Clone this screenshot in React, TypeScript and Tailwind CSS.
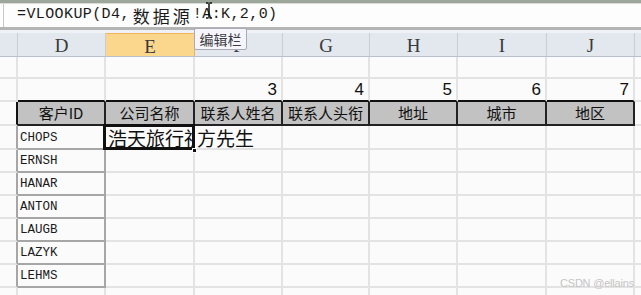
import React from "react";

const widths = [18, 88, 89, 88, 87, 88, 89, 88];
const letters = ["", "D", "E", "F", "G", "H", "I", "J"];
const ids = ["ERNSH", "HANAR", "ANTON", "LAUGB", "LAZYK", "LEHMS"];
const heads = ["客户ID", "公司名称", "联系人姓名", "联系人头衔", "地址", "城市", "地区"];

const mono = { fontFamily: '"Liberation Mono", "Noto Sans CJK SC", monospace' };
const serif = { fontFamily: '"Liberation Serif", serif' };
const cjk = { fontFamily: '"Noto Sans CJK SC", "Liberation Sans", sans-serif' };

function Row({ h, children }: { h: string; children: React.ReactNode }) {
  return <div className={`flex ${h}`}>{children}</div>;
}

export default function App() {
  return (
    <div className="relative w-[641px] h-[295px] overflow-hidden bg-[#fbfbfb]">
      {/* top strip */}
      <div className="h-[3px] bg-[#9ca69a]" />
      <div className="h-[1px] bg-[#d8ddd6]" />
      {/* formula bar */}
      <div className="flex h-[23px] bg-[#fdfdfd]">
        <div className="w-[4px] border-r border-[#c8c8c8]" />
        <div className="flex items-center pl-[13px] text-[15px] text-[#1a1a1a] tracking-[0.4px]" style={mono}>
          <span>=VLOOKUP(D4,</span>
          <span className="text-[17px] tracking-[3px] ml-[3px]" style={cjk}>数据源</span>
          <span>!A:K,2,0)</span>
        </div>
      </div>
      <div className="h-[3px] bg-[#b4b4b4]" />
      <div className="h-[3px] bg-[#eef1f5]" />
      {/* column header */}
      <div className="flex h-[24px] border-b border-[#b9c2cc]">
        {widths.map((w, i) => (
          <div
            key={i}
            style={{ width: w, ...serif }}
            className={`flex items-center justify-center pt-[2px] border-r text-[19px] leading-none text-[#3a3a3a] ${
              i === 2 ? "bg-[#fbd78e] border-[#e8b660] border-t border-t-[#f2b55a]" : "bg-[#e3e8ef] border-[#c6ced8]"
            }`}
          >
            {letters[i]}
          </div>
        ))}
        <div className="flex-1 bg-[#e3e8ef]" />
      </div>
      {/* row 1 empty */}
      <Row h="h-[22px]">
        {widths.map((w, i) => (
          <div key={i} style={{ width: w }} className="border-r-2 border-b-2 border-[#e3e3e3]" />
        ))}
        <div className="flex-1 border-b-2 border-[#e3e3e3]" />
      </Row>
      {/* row 2 numbers */}
      <Row h="h-[23px]">
        {widths.map((w, i) => (
          <div
            key={i}
            style={{ width: w, fontFamily: '"Liberation Sans", sans-serif' }}
            className={`flex items-end justify-end pr-[4px] text-[17px] leading-[20px] text-[#111] border-r-2 border-b-2 ${
              i >= 1 ? "border-b-[#111] border-r-[#e3e3e3]" : "border-[#e3e3e3]"
            }`}
          >
            {i >= 3 ? String(i) : ""}
          </div>
        ))}
        <div className="flex-1 border-b-2 border-[#e3e3e3]" />
      </Row>
      {/* row 3 headers */}
      <Row h="h-[24px]">
        {widths.map((w, i) => (
          <div
            key={i}
            style={{ width: w, ...cjk }}
            className={`flex items-end justify-center pb-[1px] text-[15px] leading-[20px] text-[#111] whitespace-nowrap overflow-hidden ${
              i === 0 ? "border-r-2 border-r-[#111] border-b-2 border-b-[#e3e3e3]" : "bg-[#c2c2c2] border-r-2 border-b-2 border-[#222]"
            }`}
          >
            {i >= 1 ? heads[i - 1] : ""}
          </div>
        ))}
        <div className="flex-1 border-b-2 border-[#e3e3e3]" />
      </Row>
      {/* row 4 CHOPS */}
      <Row h="h-[24px]">
        {widths.map((w, i) => {
          if (i === 0)
            return <div key={i} style={{ width: w }} className="border-r-2 border-r-[#a6a6a6] border-b-2 border-b-[#e3e3e3]" />;
          if (i === 1)
            return (
              <div key={i} style={{ width: w, ...mono }} className="flex items-center pl-[2px] pt-[2px] text-[12.5px] text-[#1a1a1a] border-r-2 border-b-2 border-[#a6a6a6]">
                CHOPS
              </div>
            );
          if (i === 2)
            return (
              <div key={i} style={{ width: w }} className="relative border-r-2 border-b-2 border-[#e3e3e3]">
                <div className="absolute inset-0 overflow-hidden flex items-center pl-[2px] pt-[1px] text-[19px] leading-none text-[#111] whitespace-nowrap" style={cjk}>
                  浩天旅行社
                </div>
                <div className="absolute left-[-3px] top-[-2px] right-[-2px] bottom-[-2px] border-[3px] border-[#111]" />
                <div className="absolute right-[-4px] bottom-[-5px] w-[5px] h-[5px] bg-[#111] border border-white" />
              </div>
            );
          if (i === 3)
            return (
              <div key={i} style={{ width: w, ...cjk }} className="flex items-center pl-[2px] pt-[1px] text-[19px] leading-none text-[#111] whitespace-nowrap border-r-2 border-b-2 border-[#e3e3e3]">
                方先生
              </div>
            );
          return <div key={i} style={{ width: w }} className="border-r-2 border-b-2 border-[#e3e3e3]" />;
        })}
        <div className="flex-1 border-b-2 border-[#e3e3e3]" />
      </Row>
      {ids.concat([""]).map((id, r) => (
        <Row key={r} h="h-[23px]">
          {widths.map((w, i) => {
            if (i === 0)
              return (
                <div
                  key={i}
                  style={{ width: w }}
                  className={`border-r-2 border-b-2 border-b-[#e3e3e3] ${id ? "border-r-[#a6a6a6]" : "border-r-[#e3e3e3]"}`}
                />
              );
            if (i === 1)
              return (
                <div
                  key={i}
                  style={{ width: w, ...mono }}
                  className={`flex items-center pl-[2px] pt-[2px] text-[12.5px] text-[#1a1a1a] border-r-2 border-b-2 ${
                    id ? "border-[#a6a6a6]" : "border-[#e3e3e3]"
                  }`}
                >
                  {id}
                </div>
              );
            return <div key={i} style={{ width: w }} className="border-r-2 border-b-2 border-[#e3e3e3]" />;
          })}
          <div className="flex-1 border-b-2 border-[#e3e3e3]" />
        </Row>
      ))}

      {/* tooltip */}
      <div
        className="absolute left-[194px] top-[28px] w-[53px] h-[22px] flex items-center justify-center rounded-[2px] border border-[#a9a9b8] bg-[#f5f5fb] text-[14px] text-[#3c3c44]"
        style={cjk}
      >
        编辑栏
      </div>
      {/* I-beam cursor */}
      <svg className="absolute left-[205px] top-[2px]" width="8" height="17" viewBox="0 0 8 17">
        <path d="M1 1h2.5M4.5 1H7M4 1.5v14M1 16h2.5M4.5 16H7" stroke="#111" strokeWidth="1.5" fill="none" />
      </svg>
      {/* watermark */}
      <div
        className="absolute left-[560px] top-[276px] whitespace-nowrap text-[11px] leading-[14px] tracking-[-0.2px] text-[#c4c4c4]"
        style={{ fontFamily: '"Liberation Sans", sans-serif' }}
      >
        CSDN @ellains
      </div>
    </div>
  );
}
